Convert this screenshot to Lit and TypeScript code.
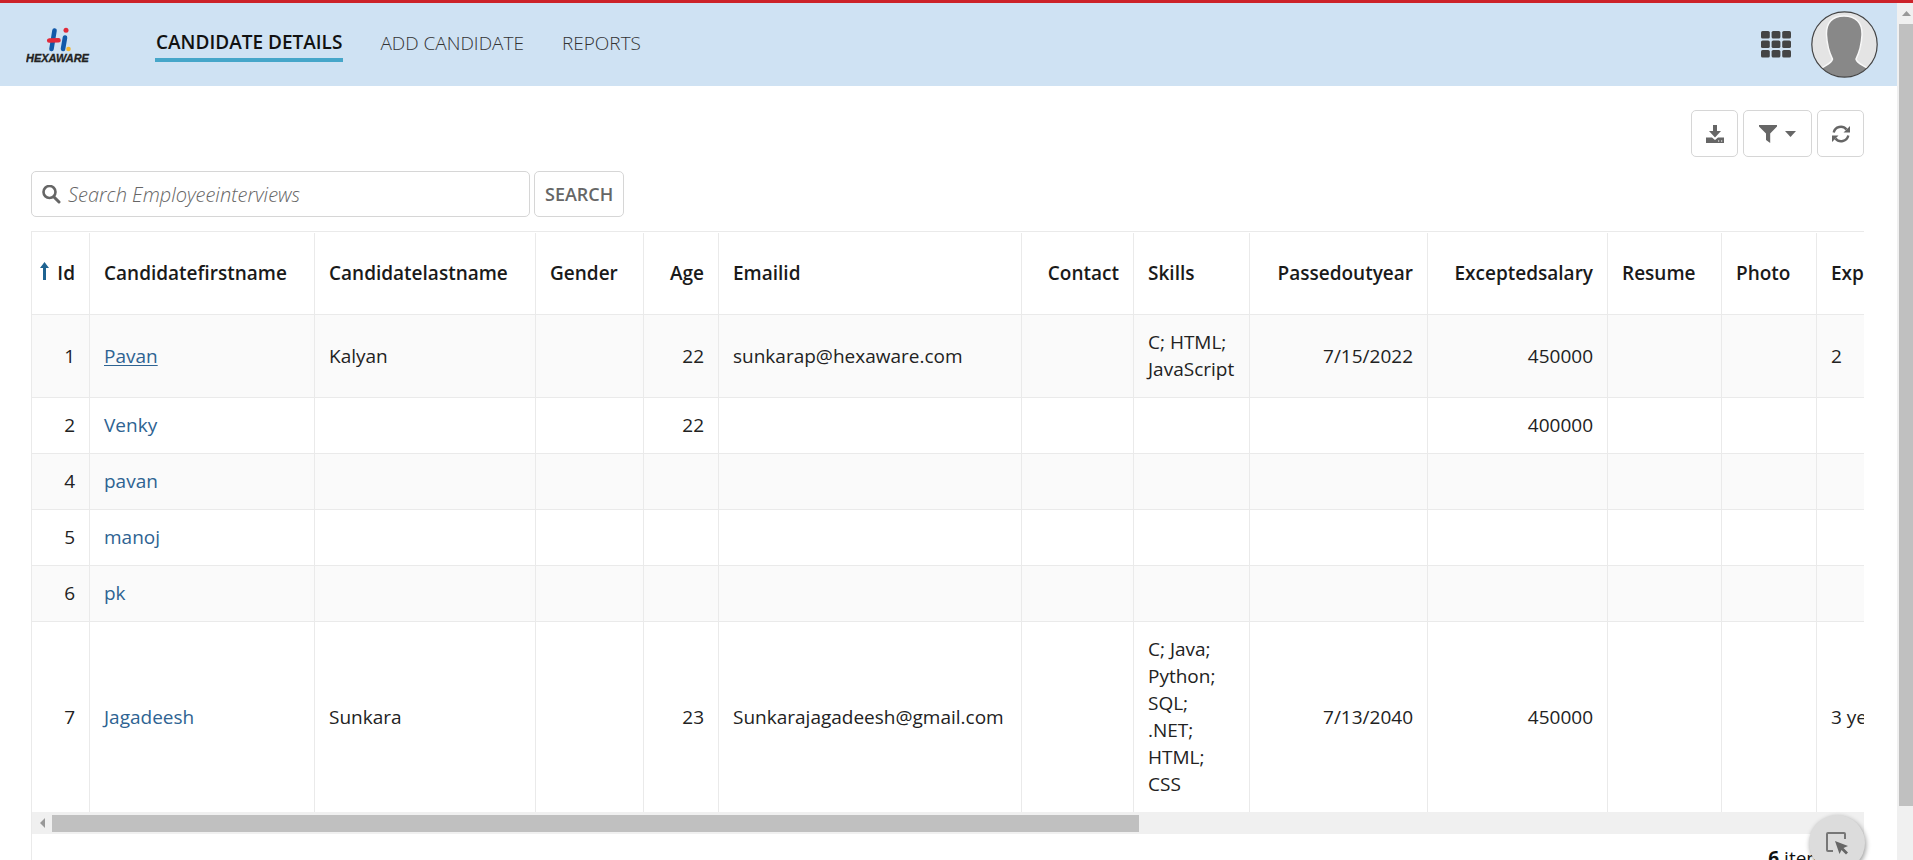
import { LitElement, html, css, svg, nothing } from "lit";
import { customElement } from "lit/decorators.js";
import { classMap } from "lit/directives/class-map.js";

interface Column {
  key: string;
  width?: number;
  numeric?: boolean;
  sorted?: boolean;
}

const COLUMNS: Column[] = [
  { key: "Id", width: 58, numeric: true, sorted: true },
  { key: "Candidatefirstname", width: 225 },
  { key: "Candidatelastname", width: 221 },
  { key: "Gender", width: 108 },
  { key: "Age", width: 75, numeric: true },
  { key: "Emailid", width: 303 },
  { key: "Contact", width: 112, numeric: true },
  { key: "Skills", width: 116 },
  { key: "Passedoutyear", width: 178, numeric: true },
  { key: "Exceptedsalary", width: 180, numeric: true },
  { key: "Resume", width: 114 },
  { key: "Photo", width: 95 },
  { key: "Experience", width: 160 },
];

const ROWS: Record<string, string>[] = [
  { Id: "1", Candidatefirstname: "Pavan", Candidatelastname: "Kalyan", Age: "22", Emailid: "sunkarap@hexaware.com", Skills: "C; HTML; JavaScript", Passedoutyear: "7/15/2022", Exceptedsalary: "450000", Experience: "2" },
  { Id: "2", Candidatefirstname: "Venky", Age: "22", Exceptedsalary: "400000" },
  { Id: "4", Candidatefirstname: "pavan" },
  { Id: "5", Candidatefirstname: "manoj" },
  { Id: "6", Candidatefirstname: "pk" },
  { Id: "7", Candidatefirstname: "Jagadeesh", Candidatelastname: "Sunkara", Age: "23", Emailid: "Sunkarajagadeesh@gmail.com", Skills: "C; Java; Python; SQL; .NET; HTML; CSS", Passedoutyear: "7/13/2040", Exceptedsalary: "450000", Experience: "3 years" },
];

@customElement("site-header")
export class SiteHeader extends LitElement {
  static styles = css`
    :host { display: block; font-family: "Open Sans", sans-serif; }
    .bar { display: flex; align-items: center; height: 83px; padding: 0 19px 0 26px; background: #cfe2f3; }
    .logo { display: block; width: 66px; height: 38px; }
    .nav { display: flex; gap: 36px; margin-left: 63px; flex: 1; }
    .link { font-size: 19px; line-height: 30px; font-weight: 300; color: #333; text-decoration: none; border-bottom: 4px solid transparent; padding: 0 1px; }
    .current { font-weight: 600; line-height: 28px; padding-bottom: 2px; color: #111; border-bottom-color: #46a6c9; }
    .plain { border: 0; background: none; padding: 0; display: block; cursor: pointer; }
    .tools { display: flex; align-items: center; gap: 20px; }
    .plain svg { display: block; }
  `;

  render() {
    const cells = [0, 1, 2].flatMap((r) =>
      [0, 1, 2].map((c) => svg`<rect x=${c * 10.6} y=${r * 9.5} width="8.8" height="7.6" rx="1.6" />`));
    return html`
      <header class="bar">
        <svg class="logo" viewBox="0 0 66 38" role="img" aria-label="Hexaware">
          <g fill="none" stroke-linecap="round" stroke-width="4.600">
            <path d="M28.500 4.500 L25.500 23" stroke="#1259a9" />
            <path d="M39 11.500 L37 23" stroke="#1259a9" />
            <path d="M23.200 14.500 L32.500 14.200" stroke="#e12a3a" />
          </g>
          <circle cx="40" cy="4.300" r="2.500" fill="#e12a3a" />
          <circle cx="42.500" cy="23" r="2.300" fill="#f2b632" />
          <text x="0" y="36" font-family="Liberation Sans, sans-serif" font-size="11" font-weight="700" font-style="italic" fill="#222" stroke="#222" stroke-width="0.300">HEXAWARE</text>
        </svg>
        <nav class="nav">
          <a class="link current" href="#details">CANDIDATE DETAILS</a>
          <a class="link" href="#add">ADD CANDIDATE</a>
          <a class="link" href="#reports">REPORTS</a>
        </nav>
        <div class="tools">
          <button class="plain" aria-label="Applications">
            <svg width="30" height="27" fill="#444">${cells}</svg>
          </button>
          <button class="plain" aria-label="Profile">
            <svg width="67" height="67" viewBox="0 0 67 67">
              <defs><clipPath id="round"><circle cx="33.5" cy="33.5" r="32.5" /></clipPath></defs>
              <circle cx="33.5" cy="33.5" r="32.5" fill="#e4e4e4" />
              <g clip-path="url(#round)">
                <path d="M33 5 C45 5 51.500 12 51 24 C50.500 34 48.500 41 45 48 C46 53 53 54 59 59 L60 68 L7 68 L8 59 C14 54 20.500 53 21.500 48 C18 41 16 34 15.500 24 C15 12 21 5 33 5 Z" fill="#888" stroke="#f8f8f8" stroke-width="1.500" />
              </g>
              <circle cx="33.5" cy="33.5" r="32.7" fill="none" stroke="#444" stroke-width="1.200" />
            </svg>
          </button>
        </div>
      </header>`;
  }
}

@customElement("candidate-grid")
export class CandidateGrid extends LitElement {
  static styles = css`
    :host { display: block; font-family: "Open Sans", sans-serif; color: #222; }
    .frame { border-top: 1px solid #eaeaea; border-left: 1px solid #eaeaea; padding-top: 1px; }
    .viewport { overflow: hidden; }
    .table { table-layout: fixed; border-collapse: separate; border-spacing: 0; width: 1945px; font-size: 19px; line-height: 27px; }
    .cell { box-sizing: border-box; padding: 14px 12px 14px 14px; height: 56px; text-align: left; vertical-align: middle; font-weight: 400; border-right: 1px solid #eaeaea; border-bottom: 1px solid #eaeaea; }
    .head { height: 82px; font-weight: 600; color: #1a1a1a; white-space: nowrap; }
    .num { text-align: right; padding-right: 14px; }
    .odd { background: #fafafa; }
    .last .cell { border-bottom: 0; }
    .name { color: #2e6392; text-decoration: none; }
    .hovered { text-decoration: underline; text-underline-offset: 2px; }
    .sort { margin-right: 8px; vertical-align: -1px; }
    .id { padding-left: 4px; }
    .scroll { display: flex; align-items: center; height: 22px; background: #f0f0f0; padding-left: 8px; gap: 7px; }
    .thumb { width: 59.6%; height: 17px; background: #c0c0c0; }
    .count { padding: 11px 31px 12px 0; text-align: right; font-size: 19px; line-height: 27px; color: #111; }
  `;

  render() {
    return html`
      <div class="frame">
        <div class="viewport">
          <table class="table">
            <colgroup>${COLUMNS.map((c) => html`<col width=${c.width ?? nothing} />`)}</colgroup>
            <thead>
              <tr>${COLUMNS.map((c) => html`<th scope="col" class=${classMap({ cell: true, head: true, num: !!c.numeric, id: !!c.sorted })}>${c.sorted
                ? html`<svg class="sort" width="9" height="19" viewBox="0 0 9 19" fill="#1f6391"><path d="M4.500 0 L9 6 H6 V18 H3 V6 H0 Z" /></svg>` : nothing}${c.key}</th>`)}</tr>
            </thead>
            <tbody>
              ${ROWS.map((row, i) => html`
                <tr class=${classMap({ odd: i % 2 === 0, last: i === ROWS.length - 1 })}>
                  ${COLUMNS.map((c) => html`<td class=${classMap({ cell: true, num: !!c.numeric })}>${c.key === "Candidatefirstname"
                    ? html`<a class=${classMap({ name: true, hovered: i === 0 })} href="#${row.Id}">${row[c.key]}</a>`
                    : row[c.key] ?? nothing}</td>`)}
                </tr>`)}
            </tbody>
          </table>
        </div>
        <div class="scroll">
          <svg width="5" height="10" fill="#999"><path d="M5 0 V10 L0 5 Z" /></svg>
          <div class="thumb"></div>
        </div>
        <div class="count"><b>6</b> items</div>
      </div>`;
  }
}

@customElement("app-root")
export class AppRoot extends LitElement {
  static styles = css`
    :host { display: flex; flex-direction: column; height: 100vh; overflow: hidden; position: relative; background: #fff; border-top: 3px solid #cc2229; box-sizing: border-box; font-family: "Open Sans", sans-serif; }
    .shell { display: flex; flex: 1; min-height: 0; }
    .page { flex: 1; min-width: 0; overflow: hidden; }
    .main { padding: 24px 33px 0 31px; display: flex; flex-direction: column; gap: 14px; }
    .actions { display: flex; justify-content: flex-end; gap: 5px; }
    .btn { box-sizing: border-box; height: 47px; min-width: 47px; border: 1px solid #d6d6d6; border-radius: 5px; background: #fff; color: #666; display: flex; align-items: center; justify-content: center; gap: 8px; padding: 0 10px; font: 600 18px "Open Sans", sans-serif; cursor: pointer; }
    .wide { padding: 0 15px; }
    .search { display: flex; gap: 4px; }
    .submit { height: 46px; }
    .field { box-sizing: border-box; display: flex; align-items: center; gap: 7px; width: 499px; height: 46px; border: 1px solid #d6d6d6; border-radius: 5px; padding: 0 10px; }
    .input { flex: 1; min-width: 0; border: 0; outline: 0; padding: 0; background: none; font: italic 300 20px "Open Sans", sans-serif; color: #333; }
    .input::placeholder { color: #666; opacity: 1; }
    .rail { width: 16px; box-sizing: border-box; background: #f0f0f0; display: flex; flex-direction: column; align-items: flex-end; padding-left: 2px; }
    .up { height: 21px; width: 14px; display: flex; align-items: center; justify-content: center; }
    .grip { width: 14px; height: 94%; max-height: 782px; background: #c0c0c0; }
    .fab { position: absolute; right: 48px; bottom: -11px; width: 56px; height: 56px; border: 0; padding: 0; border-radius: 50%; background: #dcdcdc; box-shadow: 1px 2px 5px rgba(0, 0, 0, 0.4); display: flex; align-items: center; justify-content: center; }
  `;

  render() {
    return html`
      <div class="shell">
        <div class="page">
          <site-header></site-header>
          <main class="main">
            <div class="actions">
              <button class="btn" aria-label="Download">
                <svg width="18" height="18" viewBox="0 0 18 18" fill="#666"><path d="M7 0 H11 V6 H15 L9 12.500 L3 6 H7 Z" /><path d="M0 12.500 H6 L9 15 L12 12.500 H18 V18 H0 Z" /><path d="M12 15.500 h1.200 v1 h-1.200 z M15 15.500 h1.200 v1 h-1.200 z" fill="#fff" /></svg>
              </button>
              <button class="btn wide" aria-label="Filter">
                <svg width="18" height="18" viewBox="0 0 18 18" fill="#666"><path d="M0 0 H18 V1.500 L11.200 8.500 V18 L7 15 V8.500 L0 1.500 Z" /></svg>
                <svg width="11" height="6" viewBox="0 0 11 6" fill="#666"><path d="M0 0 H11 L5.500 6 Z" /></svg>
              </button>
              <button class="btn" aria-label="Refresh">
                <svg width="18" height="18" viewBox="0 0 18 18"><g fill="none" stroke="#666" stroke-width="2.400"><path d="M1.700 7.500 A7.300 7.300 0 0 1 14.500 4.500" /><path d="M16.300 10.500 A7.300 7.300 0 0 1 3.500 13.500" /></g><path d="M18 1 V7.500 H11.500 Z M0 17 V10.500 H6.500 Z" fill="#666" /></svg>
              </button>
            </div>
            <form class="search" @submit=${(e: Event) => e.preventDefault()}>
              <label class="field">
                <svg width="19" height="19" viewBox="0 0 19 19" fill="none" stroke="#666"><circle cx="7.500" cy="7" r="6" stroke-width="2.600" /><path d="M12 12 L17 17" stroke-width="3" stroke-linecap="round" /></svg>
                <input class="input" type="text" aria-label="Search Employeeinterviews" placeholder="Search Employeeinterviews" />
              </label>
              <button class="btn submit" type="submit">SEARCH</button>
            </form>
            <candidate-grid></candidate-grid>
          </main>
        </div>
        <div class="rail">
          <div class="up"><svg width="9" height="5" fill="#999"><path d="M0 5 H9 L4.500 0 Z" /></svg></div>
          <div class="grip"></div>
        </div>
      </div>
      <button class="fab" aria-label="Select element">
        <svg width="24" height="24" viewBox="0 0 24 24"><path d="M8 20 H3 Q2 20 2 19 V3 Q2 2 3 2 H19 Q20 2 20 3 V8" fill="none" stroke="#777" stroke-width="2" /><path d="M10 10 L23 15 L18.500 17 L23 21.500 L21 23.500 L16.500 19 L14.500 23 Z" fill="#666" /></svg>
      </button>`;
  }
}
